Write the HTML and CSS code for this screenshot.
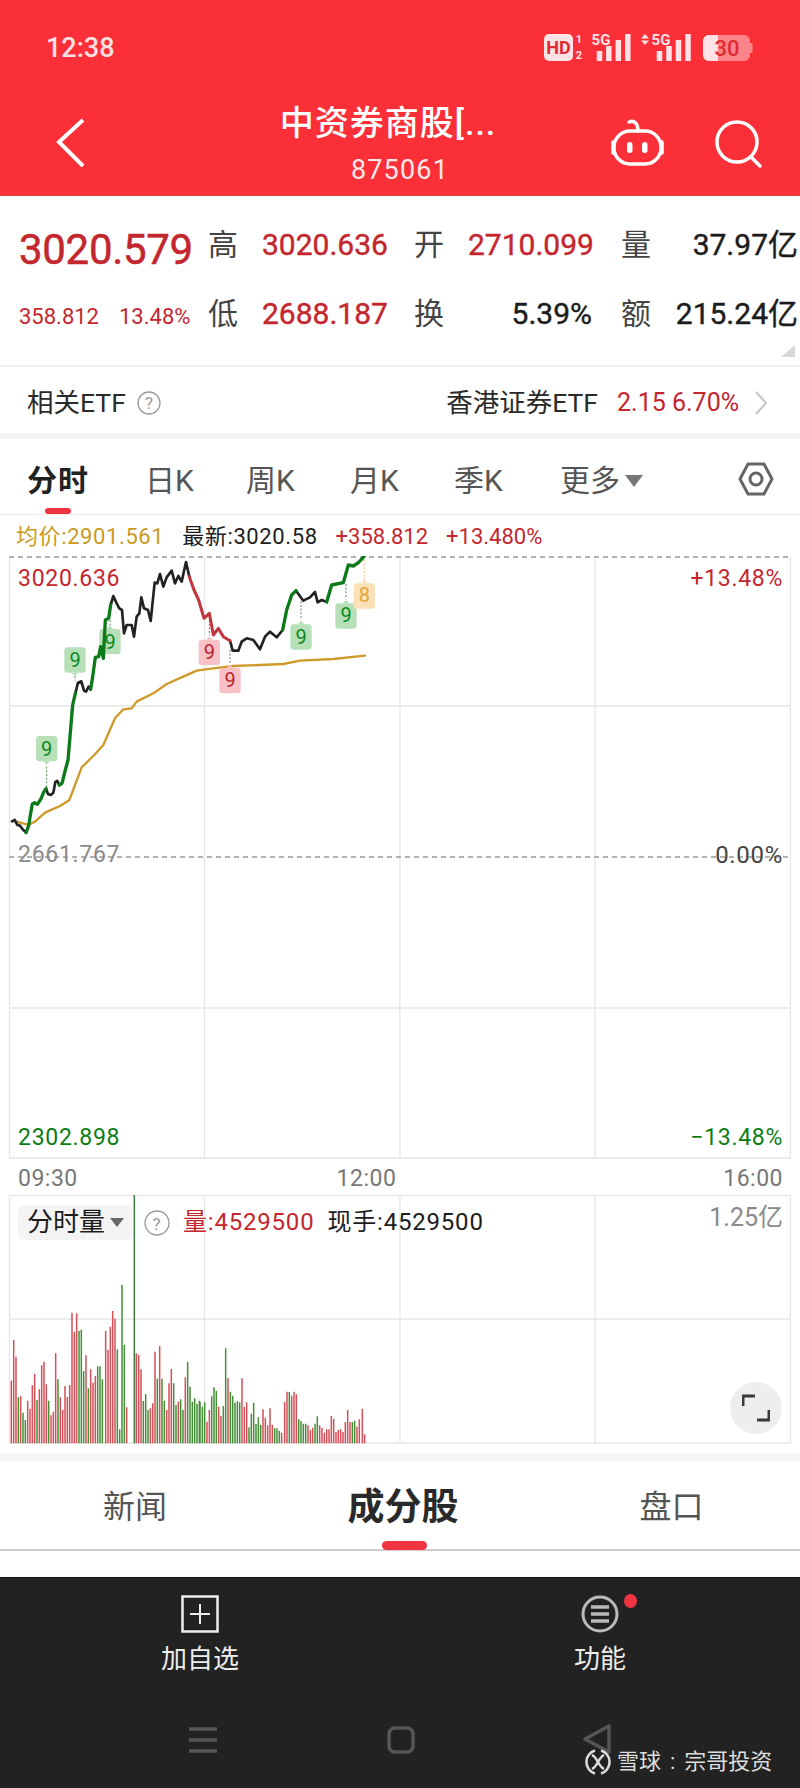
FILE: index.html
```html
<!DOCTYPE html>
<html lang="zh">
<head>
<meta charset="utf-8">
<title>中资券商股</title>
<link rel="stylesheet" href="styles.css">
</head>
<body>
<div class="page">
  <header class="header">
    <div class="status">
      <span class="clock">12:38</span>
      <svg class="status-icons" width="230" height="34" viewBox="540 30 230 34">
        <rect class="s-solid" x="544" y="34" width="29" height="27" rx="5"/>
        <text class="s-hd" x="558.5" y="53.5">HD</text>
        <text class="s-sm" x="579" y="43">1</text>
        <text class="s-sm" x="579" y="59">2</text>
        <text class="s-5g" x="601" y="45">5G</text>
        <path class="s-bars" d="M599.5 61V51M608.8 61V46M618.3 61V40M627.8 61V34"/>
        <path class="s-solid" d="M645 34l4 4.500h-8zM645 45l4-4.500h-8z"/>
        <text class="s-5g" x="661" y="45">5G</text>
        <path class="s-bars" d="M659.500 61V51M669 61V46M678.500 61V40M688 61V34"/>
        <rect class="s-dim" x="703" y="35" width="47" height="26" rx="6"/>
        <rect class="s-dim" x="750" y="43" width="2.500" height="10"/>
        <path class="s-solid" d="M709 35h9v26h-9a6 6 0 0 1-6-6V41a6 6 0 0 1 6-6z"/>
        <text class="s-batt" x="727" y="56">30</text>
      </svg>
    </div>
    <nav class="nav">
      <svg class="back" width="30" height="50" viewBox="0 0 30 50"><path d="M27 3 3 25l24 24"/></svg>
      <div class="title">
        <div class="name">中资券商股[...</div>
        <div class="code">875061</div>
      </div>
      <div class="nav-actions">
        <svg width="60" height="50" viewBox="0 0 60 50">
          <g class="ico-white">
            <path d="M21 4c5-2 9 1 9 9"/>
            <rect x="6" y="13" width="47" height="33" rx="16"/>
            <path d="M5 24v11M54 24v11"/>
          </g>
          <rect class="ico-fill" x="19" y="24" width="5.500" height="11" rx="2.700"/>
          <rect class="ico-fill" x="34" y="24" width="5.500" height="11" rx="2.700"/>
        </svg>
        <svg class="search" width="50" height="50" viewBox="0 0 50 50">
          <g class="ico-white"><circle cx="23" cy="22" r="20"/><path d="M37 37l9 9"/></g>
        </svg>
      </div>
    </nav>
  </header>

  <section class="quote">
    <div class="quote-grid">
      <div class="q-big">3020.579</div>
      <div class="q-label">高</div><div class="q-val up">3020.636</div>
      <div class="q-label">开</div><div class="q-val up">2710.099</div>
      <div class="q-label q-last">量</div><div class="q-val q-right">37.97亿</div>
      <div class="q-change"><span>358.812</span><span>13.48%</span></div>
      <div class="q-label">低</div><div class="q-val up">2688.187</div>
      <div class="q-label">换</div><div class="q-val q-right">5.39%</div>
      <div class="q-label q-last">额</div><div class="q-val q-right">215.24亿</div>
    </div>
    <span class="corner"></span>
  </section>

  <section class="etf">
    <div class="etf-left">
      <span>相关ETF</span>
      <svg width="24" height="24" viewBox="0 0 24 24"><circle class="help" cx="12" cy="12" r="11"/><text class="help-text" x="12" y="18">?</text></svg>
    </div>
    <div class="etf-right">
      <span>香港证券ETF</span>
      <span class="etf-num">2.15 6.70%</span>
      <svg width="14" height="26" viewBox="0 0 14 26"><path class="chev" d="M2 2l10 11L2 24"/></svg>
    </div>
  </section>

  <div class="gap-top"></div>

  <section class="tabs">
    <div class="tab tab-on">分时</div>
    <div class="tab tab-d">日K</div>
    <div class="tab tab-w">周K</div>
    <div class="tab tab-m">月K</div>
    <div class="tab tab-q">季K</div>
    <div class="tab tab-more">更多<i class="tri"></i></div>
    <svg class="hex" width="36" height="34" viewBox="0 0 36 34"><path d="M10 2h16l8 15-8 15H10L2 17z"/><circle cx="18" cy="17" r="6"/></svg>
  </section>

  <section class="info">
    <span class="gold">均价:2901.561</span>
    <span>最新:3020.58</span>
    <span class="up tight">+358.812</span>
    <span class="up tight">+13.480%</span>
  </section>

  <section class="chart">
    <svg class="chart-svg" width="800" height="604" viewBox="0 556 800 604">
      <path class="grid" d="M9.500 557V1158M204.500 557V1158M400 557V1158M595 557V1158M790.500 557V1158M9 706H791M9 1008H791M9 1158H791"/>
      <path class="dash" d="M9 557H791M9 857H791"/>
      <g transform="translate(0 440) scale(.33333)">
        <g class="b-green"><rect x="298" y="567" width="64" height="76" rx="10"/><path d="M320 567l10-10 10 10z"/><text x="330" y="627">9</text></g>
        <path class="stem-g" d="M330 540v20M225 708v14M140 980v65M903 484v56M1038 432v46"/>
        <path class="stem-r" d="M628 540v46M690 630v44"/>
        <path class="stem-a" d="M1093 360v60"/>
        <path class="l-avg" d="M50 1145 85 1155 105 1145 135 1118 180 1098 208 1080 225 1035 245 982 280 948 310 915 345 835 370 808 395 805 410 785 460 760 500 732 550 710 590 692 640 685 700 678 780 675 850 672 900 662 1000 657 1095 647"/>
        <path class="l-black" d="M36 1144 44 1140 52 1155 60 1157 68 1168 78 1178M138 1046 144 1062 152 1065 160 1058 166 1026 172 1023 178 1035M226 760 234 728 244 724 252 752 258 755 266 740 272 748M332 495 340 468 350 490 358 505 366 510 372 580 380 555 395 555 402 590 410 530 418 520 424 472 432 505 444 510 452 543 464 428 472 430 480 402 490 440 500 412 515 392 525 430 535 408 545 425 558 366 568 410M690 602 698 632 715 632 725 605 740 595 760 600 780 628 795 590 810 575 830 592 848 570M888 452 910 482 930 472 945 456 953 487 965 480 980 486"/>
        <path class="l-green" d="M78 1178 86 1157 92 1120 97 1092 104 1088 112 1093 122 1078 132 1055 138 1046M178 1035 186 1030 196 990 204 960 210 890 218 795 226 760M272 748 278 710 286 652 296 650 302 620 310 655 316 540 326 535 332 495M848 570 860 510 875 465 888 452M980 486 995 435 1030 428 1045 375 1060 378 1075 368 1092 350"/>
        <path class="l-red" d="M568 410 582 450 596 480 612 535 628 520 640 585 655 565 670 590 690 602"/>
        <g class="b-green"><rect x="193" y="622" width="64" height="76" rx="10"/><path d="M215 698l10 10 10-10z"/><text x="225" y="682">9</text></g>
        <g class="b-green"><rect x="108" y="888" width="64" height="76" rx="10"/><path d="M130 964l10 10 10-10z"/><text x="140" y="948">9</text></g>
        <g class="b-red"><rect x="596" y="599" width="64" height="76" rx="10"/><path d="M618 599l10-10 10 10z"/><text x="628" y="657">9</text></g>
        <g class="b-red"><rect x="658" y="684" width="64" height="76" rx="10"/><path d="M680 684l10-10 10 10z"/><text x="690" y="740">9</text></g>
        <g class="b-green"><rect x="871" y="553" width="64" height="76" rx="10"/><path d="M893 553l10-10 10 10z"/><text x="903" y="612">9</text></g>
        <g class="b-green"><rect x="1006" y="490" width="64" height="76" rx="10"/><path d="M1028 490l10-10 10 10z"/><text x="1038" y="547">9</text></g>
        <g class="b-amber"><rect x="1061" y="430" width="64" height="76" rx="10"/><path d="M1083 430l10-10 10 10z"/><text x="1093" y="487">8</text></g>
      </g>
    </svg>
    <span class="c-label c-high up">3020.636</span>
    <span class="c-label c-high-p up">+13.48%</span>
    <span class="c-label c-mid grey">2661.767</span>
    <span class="c-label c-mid-p grey-d">0.00%</span>
    <span class="c-label c-low down">2302.898</span>
    <span class="c-label c-low-p down">−13.48%</span>
  </section>

  <section class="times">
    <span>09:30</span><span class="t-mid">12:00</span><span>16:00</span>
  </section>

  <section class="volume">
    <svg class="vol-svg" width="800" height="250" viewBox="0 1195 800 250">
      <path class="grid" d="M9.500 1195V1443M204.500 1195V1443M400 1195V1443M595 1195V1443M790.500 1195V1443M9 1195.500H791M9 1319H791M9 1443H791"/>
      <g transform="translate(0 1280) scale(.33333)">
        <path class="bar-r" d="M34 490V302M41 490V180M48 490V230M62 490V348M83 490V362M90 490V386M97 490V316M104 490V281M118 490V328M125 490V256M132 490V245M139 490V313M153 490V406M160 490V395M167 490V220M181 490V352M188 490V390M195 490V318M202 490V351M209 490V315M216 490V98M223 490V155M230 490V100M258 490V226M272 490V268M279 490V308M286 490V288M317 490V152M324 490V210M331 490V140M338 490V93M345 490V116M380 490V382M409 490V220M416 490V224M423 490V268M451 490V385M458 490V370M465 490V215M479 490V198M500 490V390M507 490V310M514 490V267M535 490V365M556 490V292"/>
        <path class="bar-g" d="M55 490V352M69 490V398M76 490V420M111 490V360M146 490V362M174 490V298M237 490V153M244 490V149M251 490V273M265 490V325M293 490V259M300 490V259M307 490V298M352 490V208M359 490V448M366 490V15M373 490V194M430 490V363M437 490V342M444 490V390M472 490V296M486 490V296M493 490V362M521 490V310M528 490V375M542 490V358M549 490V390M563 490V245M570 490V320M577 490V365M584 490V355M591 490V372M598 490V362"/>
        <path class="bar-tall" d="M403 490V-255"/>
      </g>
      <g transform="translate(200 1280) scale(.33333)">
        <path class="bar-r" d="M21 490V425M28 490V390M56 490V380M63 490V407M84 490V295M126 490V295M133 490V381M140 490V367M189 490V388M196 490V413M203 490V436M210 490V385M217 490V434M245 490V458M254 490V366M261 490V335M275 490V347M282 490V335M289 490V343M324 490V436M331 490V450M338 490V443M359 490V436M366 490V444M373 490V458M380 490V448M387 490V448M394 490V408M401 490V417M408 490V456M415 490V450M422 490V448M429 490V456M436 490V426M443 490V390M450 490V426M471 490V440M478 490V418M487 490V386M494 490V463"/>
        <path class="bar-g" d="M0 490V365M7 490V380M14 490V367M35 490V349M42 490V322M49 490V333M70 490V378M77 490V205M91 490V335M98 490V347M105 490V368M112 490V364M119 490V367M147 490V442M154 490V401M161 490V368M168 490V432M175 490V412M182 490V435M224 490V445M231 490V445M238 490V452M268 490V336M296 490V418M303 490V423M310 490V431M317 490V431M345 490V431M352 490V409M457 490V426M464 490V422"/>
      </g>
    </svg>
    <div class="v-bar">
      <div class="v-select">分时量<i class="tri tri-d"></i></div>
      <svg class="v-help" width="26" height="26" viewBox="0 0 26 26"><circle class="help" cx="13" cy="13" r="12"/><text class="help-text" x="13" y="20">?</text></svg>
      <span class="up">量:4529500</span>
      <span>现手:4529500</span>
    </div>
    <span class="v-max">1.25亿</span>
    <div class="v-full">
      <svg width="28" height="28" viewBox="0 0 28 28"><path d="M1 12V2h12M27 16v10H15"/></svg>
    </div>
  </section>

  <div class="gap-bottom"></div>

  <section class="subtabs">
    <div class="subtab">新闻</div>
    <div class="subtab subtab-on">成分股</div>
    <div class="subtab">盘口</div>
  </section>
  <div class="spacer"></div>

  <footer class="footer">
    <div class="actions">
      <div class="action">
        <svg width="38" height="38" viewBox="0 0 38 38"><rect class="a-box" x="1.500" y="1.500" width="35" height="35"/><path class="a-plus" d="M19 9v20M9 19h20"/></svg>
        <span>加自选</span>
      </div>
      <div class="action">
        <svg width="38" height="38" viewBox="0 0 38 38"><circle class="a-ring" cx="19" cy="19" r="17"/><path class="a-lines" d="M10 12h18M10 19h18M10 26h18"/></svg>
        <span>功能</span>
        <i class="dot"></i>
      </div>
    </div>
    <div class="sysnav">
      <svg width="28" height="26" viewBox="0 0 28 26"><path class="n-lines" d="M0 2h28M0 13h28M0 24h28"/></svg>
      <svg width="28" height="28" viewBox="0 0 28 28"><rect class="n-line" x="2" y="2" width="24" height="24" rx="6"/></svg>
      <svg width="28" height="30" viewBox="0 0 28 30"><path class="n-line" d="M26 2v26L2 15z"/></svg>
    </div>
    <div class="mark">
      <svg width="28" height="28" viewBox="0 0 28 28"><g class="m-logo"><path d="M11 2.500a12 12 0 0 0 0 23M17 2.500a12 12 0 0 1 0 23"/><path d="M8 7c6 3 6 11 12 14M20 7c-6 3-6 11-12 14"/></g></svg>
      <span>雪球<b class="colon">:</b>宗哥投资</span>
    </div>
  </footer>
</div>
</body>
</html>
```

FILE: styles.css
```css
* { box-sizing: border-box; }
html, body { margin: 0; padding: 0; background: #fff; }
body { font-family: Roboto, "Noto Sans CJK SC", sans-serif; color: #1c1c1c; }
.page { width: 800px; height: 1788px; overflow: hidden; display: flex; flex-direction: column; }
i { display: block; font-style: normal; }
.up { color: #c4262e; }
.down { color: #0b7d14; }
.gold { color: #c99a22; }
.grey { color: #8a8a8a; }
.grey-d { color: #444; }

/* header */
.header { height: 196px; background: #fb2f38; color: #fff; border-bottom: 1px solid #d8434a; flex: none; }
.status { height: 92px; padding-left: 46px; position: relative; }
.clock { display: block; padding-top: 31px; font-size: 27px; line-height: 34px; font-weight: 500; color: #fce0e2; }
.status-icons { position: absolute; left: 540px; top: 30px; }
.s-solid { fill: #fde3e5; }
.s-dim { fill: #f98489; }
.s-hd { font: 700 18px Roboto, sans-serif; fill: #e02a34; text-anchor: middle; }
.s-sm { font: 700 11px Roboto, sans-serif; fill: #fde3e5; text-anchor: middle; }
.s-5g { font: 700 15px Roboto, sans-serif; fill: #fde3e5; text-anchor: middle; }
.s-bars { stroke: #fde3e5; stroke-width: 5.500; fill: none; }
.s-batt { font: 500 22px Roboto, sans-serif; fill: #e02a34; text-anchor: middle; }
.nav { height: 103px; position: relative; }
.back { position: absolute; left: 56px; top: 25px; }
.back path { fill: none; stroke: #fff; stroke-width: 4; }
.title { position: absolute; left: 0; right: 0; top: 7px; text-align: center; }
.name { font-size: 34px; line-height: 48px; font-weight: 500; letter-spacing: 1px; white-space: nowrap; padding-right: 24px; }
.code { margin-top: 5px; font-size: 27px; line-height: 36px; letter-spacing: 1.200px; color: #fde9ea; }
.nav-actions { position: absolute; left: 608px; top: 26px; display: flex; gap: 46px; }
.search { margin-top: 2px; }
.ico-white { fill: none; stroke: #fff; stroke-width: 3.500; stroke-linecap: round; }
.ico-fill { fill: #fff; }

/* quote */
.quote { height: 171px; position: relative; padding: 14px 2px 0 19px; border-bottom: 2px solid #efefef; flex: none; }
.quote-grid { display: grid; grid-template-columns: 189px 54px 152px 54px 124px 58px 148px; grid-auto-rows: 69px; align-items: center; }
.q-big { font-size: 42px; line-height: 48px; font-weight: 400; color: #c4262e; padding-top: 10px; letter-spacing: -.300px; -webkit-text-stroke: .5px #c4262e; }
.q-label { font-size: 30px; line-height: 40px; color: #444; }
.q-last { padding-left: 29px; }
.q-val { font-size: 30px; line-height: 40px; font-weight: 400; white-space: nowrap; -webkit-text-stroke: .4px currentColor; }
.q-right { text-align: right; }
.q-change { display: flex; gap: 20px; font-size: 22px; line-height: 30px; color: #c4262e; padding-top: 6px; }
.corner { position: absolute; left: 781px; top: 149px; width: 0; height: 0; border-left: 14px solid transparent; border-bottom: 12px solid #d8d8d8; }

/* etf */
.etf { height: 66px; display: flex; justify-content: space-between; align-items: center; padding: 6px 32px 0 27px; flex: none; font-size: 26.500px; line-height: 34px; color: #2a2a2a; }
.etf-left { display: flex; align-items: center; gap: 11px; }
.etf-right { display: flex; align-items: center; }
.etf-num { color: #c4262e; margin: 0 15px 0 19px; font-size: 25px; }
.help { fill: none; stroke: #9a9a9a; stroke-width: 1.300; }
.help-text { font: 400 17px Roboto, sans-serif; fill: #9a9a9a; text-anchor: middle; }
.chev { fill: none; stroke: #c4c4c4; stroke-width: 2; }
.gap-top { height: 6px; background: #f5f5f5; flex: none; }

/* period tabs */
.tabs { height: 76px; position: relative; border-bottom: 1px solid #ececec; flex: none; }
.tab { position: absolute; top: 21px; font-size: 30px; line-height: 42px; color: #555; white-space: nowrap; }
.tab-on { left: 27px; font-weight: 700; color: #222; letter-spacing: 1px; }
.tab-on::after { content: ""; position: absolute; left: 18px; top: 48px; width: 26px; height: 6px; border-radius: 3px; background: #ef3340; }
.tab-d { left: 145px; }
.tab-w { left: 246px; }
.tab-m { left: 350px; }
.tab-q { left: 454px; }
.tab-more { left: 560px; display: flex; align-items: center; gap: 5px; }
.tri { width: 0; height: 0; border-left: 9px solid transparent; border-right: 9px solid transparent; border-top: 12px solid #777; }
.hex { position: absolute; left: 738px; top: 23px; }
.hex path, .hex circle { fill: none; stroke: #666; stroke-width: 3; }

/* info row */
.info { height: 41px; display: flex; align-items: center; padding: 3px 0 0 16px; gap: 18px; font-size: 22px; line-height: 30px; letter-spacing: .600px; white-space: nowrap; flex: none; }
.tight { letter-spacing: 0; }

/* chart */
.chart { position: relative; height: 604px; flex: none; }
.chart-svg, .vol-svg { display: block; }
.grid { fill: none; stroke: #e6e6e6; stroke-width: 1.300; }
.dash { fill: none; stroke: #999; stroke-width: 1.300; stroke-dasharray: 5 4; }
.l-black, .l-green, .l-red, .l-avg { fill: none; stroke-linejoin: round; stroke-linecap: round; }
.l-black { stroke: #222; stroke-width: 8; }
.l-green { stroke: #0d7a1a; stroke-width: 10; }
.l-red { stroke: #c2353c; stroke-width: 9; }
.l-avg { stroke: #cf9a2a; stroke-width: 7; }
.stem-g, .stem-r, .stem-a { fill: none; stroke-width: 3; stroke-dasharray: 6 5; }
.stem-g { stroke: #55885a; }
.stem-r { stroke: #a06066; }
.stem-a { stroke: #e8c890; }
.b-green rect, .b-green path { fill: #b7e0b8; }
.b-red rect, .b-red path { fill: #f7c1c6; }
.b-amber rect, .b-amber path { fill: #fbe1b8; }
.b-green text, .b-red text, .b-amber text { font: 400 60px Roboto, sans-serif; text-anchor: middle; }
.b-green text { fill: #0a8a1e; }
.b-red text { fill: #b8242e; }
.b-amber text { fill: #e2a636; }
.c-label { position: absolute; font-size: 23px; line-height: 30px; letter-spacing: .700px; white-space: nowrap; }
.c-high, .c-high-p { top: 8px; }
.c-mid, .c-mid-p { top: 284px; }
.c-low, .c-low-p { top: 567px; }
.c-high, .c-mid, .c-low { left: 18px; }
.c-high-p, .c-mid-p, .c-low-p { right: 17px; }
.c-mid-p { font-size: 24px; }

.times { height: 35px; display: flex; justify-content: space-between; align-items: center; padding: 2px 17px 0 18px; font-size: 23px; line-height: 30px; color: #777; letter-spacing: .500px; flex: none; }
.t-mid { margin-right: 68px; }

/* volume */
.volume { position: relative; height: 258px; flex: none; }
.bar-r, .bar-g, .bar-tall { fill: none; stroke-width: 4.500; }
.bar-r { stroke: #d44f58; }
.bar-g { stroke: #438f36; }
.bar-tall { stroke: #3d7a40; stroke-width: 4.500; }
.v-bar { position: absolute; left: 18px; top: 10px; display: flex; align-items: center; font-size: 24px; line-height: 35px; letter-spacing: .800px; white-space: nowrap; }
.v-select { width: 114px; height: 35px; display: flex; align-items: center; gap: 5px; padding-left: 9px; border-radius: 5px; background: rgba(240, 240, 240, .75); font-size: 26px; letter-spacing: 0; }
.tri-d { border-left-width: 7px; border-right-width: 7px; border-top-width: 9px; border-top-color: #666; }
.v-help { margin: 0 13px 0 12px; }
.v-bar span + span { margin-left: 13px; }
.v-max { position: absolute; right: 17px; top: 7px; font-size: 25px; line-height: 32px; color: #8a8a8a; }
.v-full { position: absolute; left: 730px; top: 187px; width: 52px; height: 52px; border-radius: 50%; background: #eee; display: flex; align-items: center; justify-content: center; }
.v-full path { fill: none; stroke: #3a3a3a; stroke-width: 3; }
.gap-bottom { height: 8px; background: #f5f5f5; flex: none; }

/* sub tabs */
.subtabs { height: 90px; position: relative; display: grid; grid-template-columns: 270px 270px 260px; border-bottom: 2px solid #ccc; flex: none; }
.subtab { font-size: 32px; line-height: 93px; height: 88px; color: #555; text-align: center; }
.subtab-on { position: relative; font-size: 37px; font-weight: 700; color: #2a2a2a; padding-right: 4px; }
.subtab-on::after { content: ""; position: absolute; left: 112px; top: 80px; width: 45px; height: 9px; border-radius: 5px; background: #ef3340; }
.subtab:last-child { padding-left: 3px; }
.spacer { height: 26px; flex: none; }

/* footer */
.footer { position: relative; flex: 1; background: #222; color: #eee; border-top: 1px solid #111; }
.actions { display: grid; grid-template-columns: 400px 400px; padding-top: 17px; }
.action { position: relative; display: flex; flex-direction: column; align-items: center; gap: 8px; font-size: 26px; line-height: 36px; }
.dot { position: absolute; left: 224px; top: -1px; width: 13px; height: 14px; border-radius: 50%; background: #ef3340; }
.a-box { fill: none; stroke: #eee; stroke-width: 2.500; }
.a-plus { fill: none; stroke: #eee; stroke-width: 2; }
.a-ring { fill: none; stroke: #bbb; stroke-width: 3; }
.a-lines { fill: none; stroke: #bbb; stroke-width: 3.500; }
.sysnav { position: absolute; left: 0; top: 148px; width: 100%; height: 30px; }
.sysnav svg { position: absolute; }
.sysnav svg:nth-child(1) { left: 189px; top: 1px; }
.sysnav svg:nth-child(2) { left: 387px; top: 0; }
.sysnav svg:nth-child(3) { left: 583px; top: -2px; }
.n-lines, .n-line { fill: none; stroke: #565656; stroke-width: 3.500; stroke-linejoin: round; }
.mark { position: absolute; left: 584px; top: 169px; display: flex; align-items: center; gap: 5px; font-size: 22px; line-height: 30px; color: #dedede; white-space: nowrap; }
.colon { font-weight: 400; margin: 0 9px; }
.m-logo { fill: none; stroke: #dedede; stroke-width: 2.500; }
```
